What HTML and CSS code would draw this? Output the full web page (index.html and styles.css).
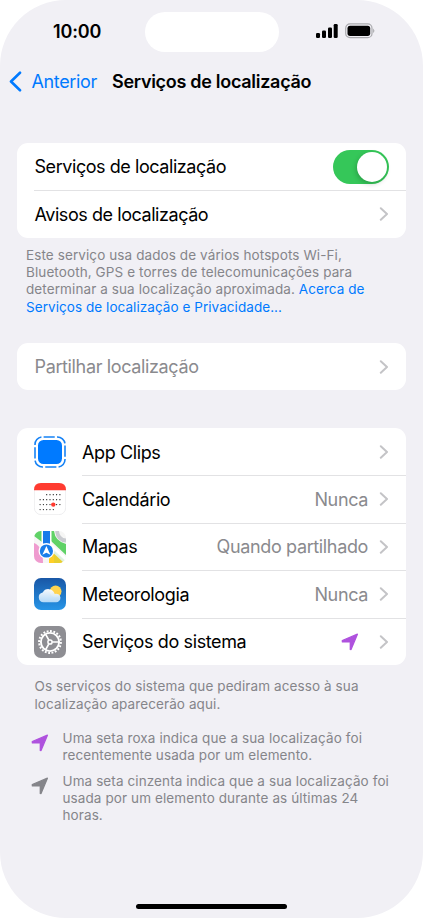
FILE: index.html
```html
<!DOCTYPE html>
<html lang="pt">
<head>
<meta charset="utf-8">
<title>Serviços de localização</title>
<link rel="stylesheet" href="styles.css">
</head>
<body>
<svg width="0" height="0" class="defs" aria-hidden="true">
  <symbol id="chevron" viewBox="0 0 10 14"><path d="M1.800 1.300 8 7l-6.200 5.700" fill="none" stroke="#c4c4c7" stroke-width="2" stroke-linecap="round" stroke-linejoin="round"/></symbol>
  <symbol id="arrow" viewBox="0 0 18 18"><path d="M1.300 7.500 16.400 1.200 10 16.600 9.300 16.400V9.300L8.900 8.900H1.400z" fill="currentColor" stroke="currentColor" stroke-width="1.300" stroke-linejoin="round"/></symbol>
</svg>
<main class="phone">
  <header class="status">
    <time class="clock">10:00</time>
    <div class="island"></div>
    <div class="indicators">
      <svg class="signal" viewBox="0 0 22 14"><rect x="0" y="9" width="4" height="5" rx="1.300"/><rect x="6" y="6.500" width="4" height="7.500" rx="1.300"/><rect x="12" y="3.500" width="4" height="10.500" rx="1.300"/><rect x="17.700" y="0" width="4" height="14" rx="1.300"/></svg>
      <svg class="battery" viewBox="0 0 30 16"><rect x=".7" y=".9" width="26.300" height="13.800" rx="4.300" fill="none" stroke="#aaaaae" stroke-width="1.200"/><rect x="2.500" y="2.700" width="22.700" height="10.200" rx="2.600"/><path d="M28.300 5.500q2 2.300 0 4.600z" fill="#98989c"/></svg>
    </div>
  </header>
  <nav class="nav">
    <a class="back"><svg viewBox="0 0 13 21"><path d="M11 1.700 2 10.500l9 8.800" fill="none" stroke="currentColor" stroke-width="2.600" stroke-linecap="round" stroke-linejoin="round"/></svg><span>Anterior</span></a>
    <h1>Serviços de localização</h1>
  </nav>

  <section class="card first">
    <div class="row"><span class="label">Serviços de localização</span><span class="toggle"><i></i></span></div>
    <div class="row line"><span class="label">Avisos de localização</span><svg class="chev"><use href="#chevron"/></svg></div>
  </section>
  <p class="note intro">Este serviço usa dados de vários hotspots Wi-Fi,<br>Bluetooth, GPS e torres de telecomunicações para<br>determinar a sua localização aproximada. <a>Acerca de<br>Serviços de localização e Privacidade...</a></p>

  <section class="card share">
    <div class="row"><span class="label muted">Partilhar localização</span><svg class="chev"><use href="#chevron"/></svg></div>
  </section>

  <section class="card apps">
    <div class="row">
      <svg class="icon" viewBox="0 0 32 32"><rect x="4" y="4" width="24" height="24" rx="5.500" fill="#007aff"/><rect x="1" y="1" width="30" height="30" rx="7.500" fill="none" stroke="#1682f5" stroke-width="1.600" pathLength="96" stroke-dasharray="10 2" stroke-dashoffset="-1"/></svg>
      <span class="label">App Clips</span><svg class="chev"><use href="#chevron"/></svg>
    </div>
    <div class="row line">
      <svg class="icon" viewBox="0 0 32 32"><rect x=".3" y=".3" width="31.400" height="31.400" rx="7" fill="#fff" stroke="#e5e5e8" stroke-width=".7"/><path d="M0 7.200V7q0-7 7-7h18q7 0 7 7v.2z" fill="#ff3b30"/><g fill="none" stroke="#222" stroke-width="1.300" stroke-linecap="round" stroke-dasharray="0 3.300"><path d="M12.700 11.700h14"/><path d="M6.100 16.700h20.500"/><path d="M6.100 21.600h20.500"/><path d="M6.100 26.600h14"/></g><circle cx="19.300" cy="21.600" r="2.200" fill="#ff3b30"/></svg>
      <span class="label">Calendário</span><span class="value">Nunca</span><svg class="chev"><use href="#chevron"/></svg>
    </div>
    <div class="row line">
      <svg class="icon" viewBox="0 0 32 32"><defs><clipPath id="tile"><rect width="32" height="32" rx="7"/></clipPath></defs><g clip-path="url(#tile)"><path fill="#f6f6f5" d="M0 0h32v32H0z"/><path d="M0 0h8v11L0 5zM17 0h3q1 10 12 13v11L17 10z" fill="#60d267"/><path d="M0 12q9 3 9 20H0z" fill="#ef9bcf"/><path d="M16 20v12h12z" fill="#ffcf27"/><path d="M15 32V18l15 14" fill="#ffcf27"/><path d="M23 0q1 9 9 9.500" fill="none" stroke="#c9cbd0" stroke-width="3.800"/><path d="m15 13 17 15.500" stroke="#fff" stroke-width="3.500"/><path d="M20 32V19l12 11v2z" fill="#60d267" opacity=".15"/><path d="M7.500 0h10v15h-10z" fill="#fff"/><path d="M9 0h7v15H9z" fill="#187bea"/><circle cx="12.400" cy="20" r="7.900" fill="#fff"/><circle cx="12.400" cy="20" r="6.600" fill="#197eea"/><path d="m12.400 15 4 8.700-4-1.900-4 1.900z" fill="#fff"/></g></svg>
      <span class="label">Mapas</span><span class="value">Quando partilhado</span><svg class="chev"><use href="#chevron"/></svg>
    </div>
    <div class="row line">
      <svg class="icon" viewBox="0 0 32 32"><defs><linearGradient id="sky" x2="0" y2="1"><stop stop-color="#1957a6"/><stop offset="1" stop-color="#2795e7"/></linearGradient><linearGradient id="cloud" x2="0" y2="1"><stop stop-color="#fff"/><stop offset="1" stop-color="#b9dcf8"/></linearGradient></defs><rect width="32" height="32" rx="7" fill="url(#sky)"/><circle cx="21.600" cy="13.300" r="5.900" fill="#ffd34f"/><path d="M9.600 24.200a4.900 4.900 0 0 1-.9-9.700 6.500 6.500 0 0 1 12 1.400A4.300 4.300 0 1 1 21.500 24.200z" fill="url(#cloud)" opacity=".96"/></svg>
      <span class="label">Meteorologia</span><span class="value">Nunca</span><svg class="chev"><use href="#chevron"/></svg>
    </div>
    <div class="row line">
      <svg class="icon" viewBox="0 0 32 32"><rect width="32" height="32" rx="7" fill="#8e8e93"/><g fill="none" stroke="#fff"><circle cx="16" cy="16" r="10.900" stroke-width="2" pathLength="80" stroke-dasharray="2.200 1.800"/><circle cx="16" cy="16" r="9.100" stroke-width="1.900"/><path d="M18.200 16H25M14.900 14.100 11.500 8.200M14.900 17.900l-3.400 5.900" stroke-width="1.700"/><circle cx="16" cy="16" r="2.100" stroke-width="1.500"/></g></svg>
      <span class="label">Serviços do sistema</span><svg class="arrow purple"><use href="#arrow"/></svg><svg class="chev"><use href="#chevron"/></svg>
    </div>
  </section>

  <p class="note footer">Os serviços do sistema que pediram acesso à sua<br>localização aparecerão aqui.</p>
  <div class="legend"><svg class="arrow purple"><use href="#arrow"/></svg><p class="note">Uma seta roxa indica que a sua localização foi<br>recentemente usada por um elemento.</p></div>
  <div class="legend"><svg class="arrow gray"><use href="#arrow"/></svg><p class="note">Uma seta cinzenta indica que a sua localização foi<br>usada por um elemento durante as últimas 24<br>horas.</p></div>
  <div class="home"></div>
</main>
</body>
</html>
```
FILE: styles.css
```css
* { box-sizing: border-box; }
body { margin: 0; background: #fff; font-family: Inter, "Liberation Sans", sans-serif; color: #000; }
.defs { position: absolute; }
svg { display: block; flex: none; }
.phone { width: 423px; height: 918px; background: #f1f0f5; border-radius: 66px; overflow: hidden; display: flex; flex-direction: column; }
.status { height: 63px; flex: none; display: grid; grid-template-columns: 145px 134px 1fr; align-items: center; }
.clock { padding-left: 53px; font-size: 18px; font-weight: 600; letter-spacing: -.15px; }
.island { height: 40px; border-radius: 20px; background: #fff; }
.indicators { display: flex; gap: 7px; padding-left: 37px; }
.signal { width: 22px; height: 14px; }
.battery { width: 30px; height: 16px; margin-top: -1px; }
.nav { height: 36px; flex: none; display: flex; align-items: center; padding-left: 9px; }
.back { display: flex; align-items: center; color: #007aff; font-size: 18px; letter-spacing: -.37px; width: 103px; gap: 9.500px; }
.back svg { width: 13px; height: 21px; }
h1 { margin: 0; font-size: 18px; font-weight: 600; letter-spacing: -.29px; white-space: nowrap; }
.card { flex: none; margin: 0 17px; background: #fff; border-radius: 11px; overflow: hidden; }
.first { margin-top: 44px; }
.row { height: 47.400px; display: flex; align-items: center; padding: 0 17px; position: relative; }
.line::before { content: ""; position: absolute; height: 1px; background: #e2e2e4; top: -.4px; left: 17px; right: 0; }
.apps .line::before { left: 65px; }
.label { font-size: 18px; letter-spacing: -.44px; white-space: nowrap; margin-right: auto; padding-left: .5px; }
.apps .label { letter-spacing: -.38px; padding-left: 0; }
.muted, .value { color: #8a8a8e; }
.value { font-size: 18px; letter-spacing: -.36px; margin-right: 11px; }
.chev { width: 10px; height: 14px; }
.toggle { width: 56px; height: 34px; border-radius: 17px; background: #35c759; padding: 2px; display: flex; justify-content: flex-end; }
.toggle i { width: 30px; height: 30px; border-radius: 50%; background: #fff; box-shadow: -1px 2px 5px #0003; }
.note { margin: 0; color: #85858a; font-size: 13.500px; line-height: 17.300px; letter-spacing: .1px; white-space: nowrap; }
.note a { color: #007aff; letter-spacing: .06px; }
.intro { margin: 9px 0 0 26px; }
.share { margin-top: 27px; }
.share .label { letter-spacing: -.36px; }
.apps { margin-top: 38px; }
.icon { width: 32px; height: 32px; margin-right: 16px; }
.arrow { width: 18px; height: 18px; }
.row .arrow { margin-right: 20px; }
.purple { color: #af52de; }
.gray { color: #85858a; }
.footer { margin: 13px 0 0 34.500px; }
.legend { display: flex; gap: 13.500px; margin: 17px 0 0 31px; }
.legend + .legend { margin-top: 8px; }
.legend .arrow { margin-top: 4px; }
.home { width: 151px; height: 5px; border-radius: 3px; background: #000; margin: auto auto 9px; }
```
